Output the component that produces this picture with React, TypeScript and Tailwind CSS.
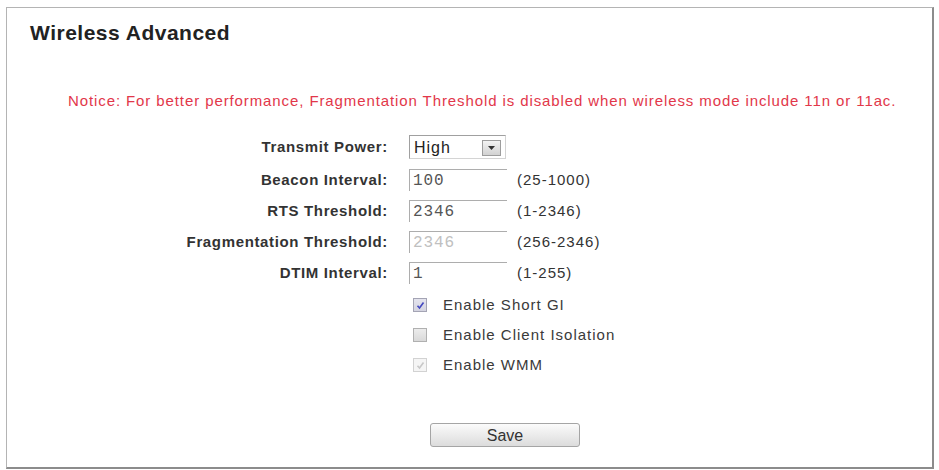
import React from "react";

const sans = { fontFamily: '"Liberation Sans", Arial, sans-serif' };
const mono = { fontFamily: '"Liberation Mono", "Courier New", monospace' };

type Row = { label: string; value: string; range: string; disabled?: boolean };

const rows: Row[] = [
  { label: "Beacon Interval:", value: "100", range: "(25-1000)" },
  { label: "RTS Threshold:", value: "2346", range: "(1-2346)" },
  { label: "Fragmentation Threshold:", value: "2346", range: "(256-2346)", disabled: true },
  { label: "DTIM Interval:", value: "1", range: "(1-255)" },
];

function Check({ checked, disabled }: { checked?: boolean; disabled?: boolean }) {
  return (
    <span
      className={
        "flex h-[14px] w-[14px] shrink-0 items-center justify-center border " +
        (disabled
          ? "border-[#d2d2d2] bg-[#f5f5f5]"
          : checked
            ? "border-[#a4a4b4] bg-gradient-to-b from-[#e4e4ee] to-[#d4d4e0]"
            : "border-[#b0b0b0] bg-gradient-to-b from-[#ececec] to-[#d9d9d9]")
      }
    >
      {checked && (
        <svg width="9" height="9" viewBox="0 0 9 9">
          <path
            d="M1.5 4.8 L3.5 7 L7.5 1.5"
            fill="none"
            stroke={disabled ? "#c8c8c8" : "#4348c0"}
            strokeWidth="1.6"
          />
        </svg>
      )}
    </span>
  );
}

export default function App() {
  return (
    <div className="h-[470px] w-[939px] bg-white pl-[6px] pt-[7px]" style={sans}>
      <div className="flex h-[462px] w-[928px] flex-col border-l border-t border-r-2 border-b-2 border-l-[#b4b4b4] border-t-[#b4b4b4] border-r-[#8c8c8c] border-b-[#8c8c8c]">
        <h1 className="ml-[23px] mt-[13px] text-[21px] font-bold leading-[24px] tracking-[0.5px] text-[#222]">
          Wireless Advanced
        </h1>
        <p className="ml-[61px] mt-[47px] text-[15px] leading-[18px] tracking-[0.9px] text-[#e2374a]">
          Notice: For better performance, Fragmentation Threshold is disabled when wireless mode include 11n or 11ac.
        </p>

        <div className="mt-[24px] flex flex-col">
          {/* Transmit power */}
          <div className="flex h-[26px] items-center">
            <span className="w-[381px] text-right text-[15px] font-bold tracking-[0.65px] text-[#333]">
              Transmit Power:
            </span>
            <div className="ml-[21px] flex h-[24px] w-[97px] items-center justify-between border border-[#a0a0a0] border-r-[#d4d4d4] border-b-[#d4d4d4] bg-white pl-[4px] pr-[4px] pt-[2px]">
              <span className="text-[16px] tracking-[1px] text-[#222]">High</span>
              <span className="flex h-[16px] w-[19px] items-center justify-center border border-[#9d9d9d] bg-gradient-to-b from-[#f3f3f3] to-[#d2d2d2]">
                <svg width="7" height="4" viewBox="0 0 7 4">
                  <path d="M0 0 H7 L3.5 4 Z" fill="#333" />
                </svg>
              </span>
            </div>
          </div>

          {rows.map((r, i) => (
            <div
              key={r.label}
              className={(i === 0 ? "mt-[7px]" : "mt-[5px]") + " flex h-[26px] items-center"}
            >
              <span className="w-[381px] text-right text-[15px] font-bold tracking-[0.65px] text-[#333]">
                {r.label}
              </span>
              <div className="ml-[21px] flex h-[22px] w-[98px] items-center border-l border-t border-l-[#adadad] border-t-[#adadad] bg-white pl-[3px]">
                <span
                  className={
                    "text-[16px] tracking-[0.9px] " + (r.disabled ? "text-[#c0c0c0]" : "text-[#555]")
                  }
                  style={mono}
                >
                  {r.value}
                </span>
              </div>
              <span className="ml-[10px] text-[15px] tracking-[1px] text-[#333]">{r.range}</span>
            </div>
          ))}

          <div className="ml-[406px] mt-[10px] flex flex-col gap-[12px]">
            <label className="flex h-[18px] items-center gap-[16px] text-[15px] tracking-[1px] text-[#3a3a3a]">
              <Check checked />
              <span>Enable Short GI</span>
            </label>
            <label className="flex h-[18px] items-center gap-[16px] text-[15px] tracking-[1px] text-[#3a3a3a]">
              <Check />
              <span>Enable Client Isolation</span>
            </label>
            <label className="flex h-[18px] items-center gap-[16px] text-[15px] tracking-[1px] text-[#3a3a3a]">
              <Check checked disabled />
              <span>Enable WMM</span>
            </label>
          </div>

          <div className="ml-[423px] mt-[49px]">
            <button className="h-[24px] w-[150px] rounded-[3px] border border-[#a5a5a5] bg-gradient-to-b from-[#fbfbfb] to-[#dcdcdc] text-[16px] text-[#333]">
              Save
            </button>
          </div>
        </div>
      </div>
    </div>
  );
}
